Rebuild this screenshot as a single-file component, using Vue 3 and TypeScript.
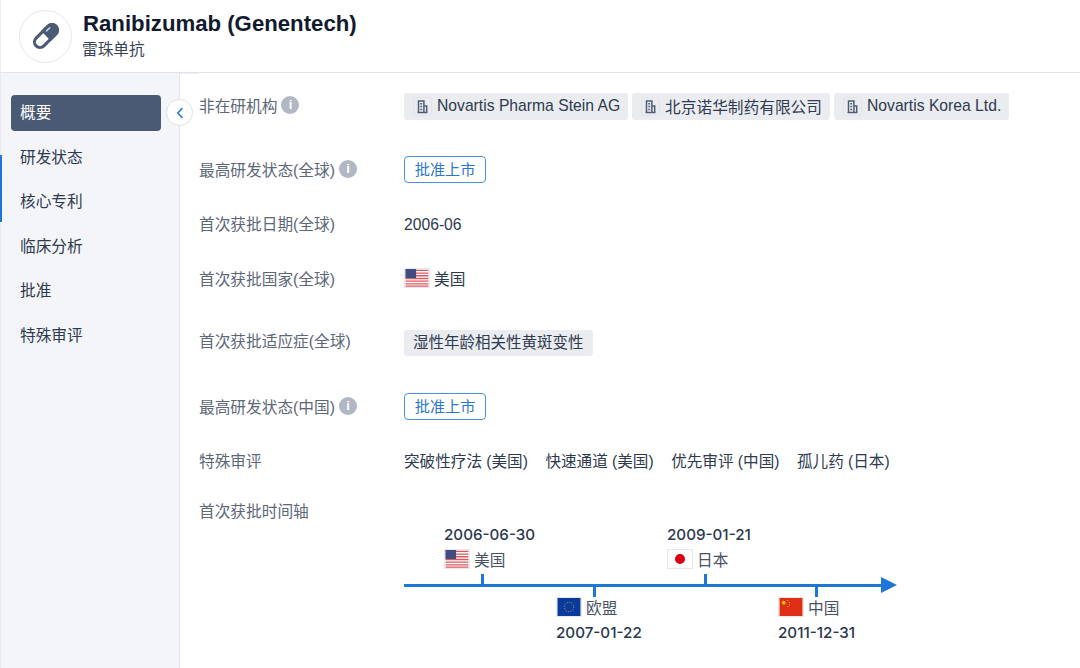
<template>
  <div class="page">
    <header class="head">
      <div class="avatar">
        <svg width="32" height="32" viewBox="0 0 32 32" fill="none">
          <g transform="rotate(-45 16 16)">
            <rect x="2" y="10.5" width="28" height="11" rx="5.5" fill="#fff" stroke="#4a5a75" stroke-width="3" />
            <path d="M16 9h8.5a7 7 0 0 1 0 14H16z" fill="#4a5a75" />
            <path d="M20 12.8h4.5" stroke="#c9d0da" stroke-width="1.6" stroke-linecap="round" />
          </g>
        </svg>
      </div>
      <div>
        <div class="title">Ranibizumab (Genentech)</div>
        <div class="subtitle">雷珠单抗</div>
      </div>
    </header>

    <div class="body">
      <aside class="side">
        <span class="side-mark"></span>
        <div v-for="(item, i) in navItems" :key="item" class="nav-item" :class="{ active: i === 0 }">{{ item }}</div>
        <button class="collapse" type="button">
          <svg width="10" height="12" viewBox="0 0 10 12" fill="none">
            <path d="M7 1.5 2.8 6 7 10.5" stroke="#1f76d9" stroke-width="1.6" stroke-linecap="round" stroke-linejoin="round" />
          </svg>
        </button>
      </aside>

      <main class="content">
        <div class="row r-org">
          <div class="label">非在研机构<i class="info">i</i></div>
          <div class="value orgs">
            <span v-for="org in orgs" :key="org" class="org">
              <span class="org-icon">
                <svg width="13" height="15" viewBox="0 0 13 15" fill="none">
                  <path d="M2.5 13.5V2h5.4v11.5M7.9 7h2.8v6.5M1.5 13.5h10M4.3 4.8h1.8M4.3 7.6h1.8M4.3 10.4h1.8" stroke="#4f5c74" stroke-width="1.5" />
                </svg>
              </span>{{ org }}
            </span>
          </div>
        </div>

        <div class="row r-status">
          <div class="label">最高研发状态(全球)<i class="info">i</i></div>
          <div class="value"><span class="status">批准上市</span></div>
        </div>

        <div class="row r-date">
          <div class="label">首次获批日期(全球)</div>
          <div class="value">2006-06</div>
        </div>

        <div class="row r-country">
          <div class="label">首次获批国家(全球)</div>
          <div class="value country">
            <svg class="flag" viewBox="0 0 26 20"><use href="#flag-us" /></svg>美国
          </div>
        </div>

        <div class="row r-indication">
          <div class="label">首次获批适应症(全球)</div>
          <div class="value"><span class="tag">湿性年龄相关性黄斑变性</span></div>
        </div>

        <div class="row r-status-cn">
          <div class="label">最高研发状态(中国)<i class="info">i</i></div>
          <div class="value"><span class="status">批准上市</span></div>
        </div>

        <div class="row r-review">
          <div class="label">特殊审评</div>
          <div class="value reviews">
            <span v-for="r in reviews" :key="r">{{ r }}</span>
          </div>
        </div>

        <div class="row r-axis">
          <div class="label">首次获批时间轴</div>
          <div class="value">
            <div class="axis">
              <div class="axis-line"></div>
              <div class="axis-head"></div>
              <div v-for="p in points" :key="p.date" class="point" :class="p.pos" :style="{ left: p.left + 'px' }">
                <span class="tick"></span>
                <div class="point-date">{{ p.date }}</div>
                <div class="point-place">
                  <svg class="flag" viewBox="0 0 26 20"><use :href="'#flag-' + p.flag" /></svg>{{ p.name }}
                </div>
              </div>
            </div>
          </div>
        </div>
      </main>
    </div>

    <svg width="0" height="0" class="defs">
      <defs>
        <symbol id="flag-us" viewBox="0 0 26 20">
          <rect width="26" height="20" fill="#fff" />
          <path d="M0 1.5h26M0 4.5h26M0 7.5h26M0 10.5h26M0 13.5h26M0 16.5h26M0 19h26" stroke="#d9595f" stroke-width="1.5" />
          <rect width="12" height="10" fill="#3f4d80" />
        </symbol>
        <symbol id="flag-eu" viewBox="0 0 26 20">
          <rect width="26" height="20" fill="#0a3a9c" />
          <circle cx="13" cy="10" r="5.2" fill="none" stroke="#b9a94a" stroke-width="1" stroke-dasharray="1.2 1.5" />
        </symbol>
        <symbol id="flag-jp" viewBox="0 0 26 20">
          <rect width="26" height="20" fill="#fff" />
          <circle cx="13" cy="10" r="5.6" fill="#d90012" />
        </symbol>
        <symbol id="flag-cn" viewBox="0 0 26 20">
          <rect width="26" height="20" fill="#de2f15" />
          <circle cx="5" cy="5.2" r="2.1" fill="#ffc800" />
          <path d="M9.5 2.2v1.2M11.3 4.4v1.2M11.3 7v1.2M9.5 9v1.2" stroke="#ffc800" stroke-width="1" />
        </symbol>
      </defs>
    </svg>
  </div>
</template>

<script setup lang="ts">
interface AxisPoint {
  date: string
  name: string
  flag: string
  left: number
  pos: 'up' | 'down'
}

const navItems = ['概要', '研发状态', '核心专利', '临床分析', '批准', '特殊审评']
const orgs = ['Novartis Pharma Stein AG', '北京诺华制药有限公司', 'Novartis Korea Ltd.']
const reviews = ['突破性疗法 (美国)', '快速通道 (美国)', '优先审评 (中国)', '孤儿药 (日本)']
const points: AxisPoint[] = [
  { date: '2006-06-30', name: '美国', flag: 'us', left: 40, pos: 'up' },
  { date: '2007-01-22', name: '欧盟', flag: 'eu', left: 152, pos: 'down' },
  { date: '2009-01-21', name: '日本', flag: 'jp', left: 263, pos: 'up' },
  { date: '2011-12-31', name: '中国', flag: 'cn', left: 374, pos: 'down' }
]
</script>

<style>
html,
body {
  margin: 0;
  background: #fff;
  overflow: hidden;
}
</style>

<style scoped>
.page {
  width: 1080px;
  height: 668px;
  overflow: hidden;
  font-family: "Liberation Sans", "Noto Sans CJK SC", sans-serif;
  font-size: 15.7px;
  color: #2f3a4f;
}

.defs {
  position: absolute;
}

.head {
  height: 73px;
  box-sizing: border-box;
  border-bottom: 1px solid #e1e4ea;
  border-left: 1px solid #eceef1;
  display: flex;
  align-items: center;
  gap: 10px;
  padding: 0 0 0 18px;
}

.avatar {
  width: 53px;
  height: 53px;
  box-sizing: border-box;
  border: 1px solid #e6e8ec;
  border-radius: 50%;
  display: flex;
  align-items: center;
  justify-content: center;
}

.title {
  font-size: 22.2px;
  line-height: 26px;
  font-weight: 700;
  color: #111a2e;
  margin-top: -1px;
  margin-left: 1px;
}

.subtitle {
  margin-top: 2px;
  line-height: 22px;
  color: #3a4457;
}

.body {
  display: flex;
  height: 595px;
}

.side {
  position: relative;
  width: 180px;
  flex: none;
  box-sizing: border-box;
  padding: 22px 18px 0 10px;
  background: #f3f5f8;
  border-left: 1px solid #e8eaee;
  border-right: 1px solid #e1e4ea;
}

.side-mark {
  position: absolute;
  left: -1px;
  top: 82px;
  width: 2px;
  height: 67px;
  background: #1f76d9;
}

.nav-item {
  height: 36px;
  line-height: 36px;
  padding-left: 9px;
  margin-bottom: 8.5px;
  border-radius: 4px;
  color: #2f3a4f;
}

.nav-item.active {
  background: #4a5a75;
  color: #fff;
}

.collapse {
  position: absolute;
  right: -14px;
  top: 26px;
  width: 27px;
  height: 27px;
  padding: 0;
  box-sizing: border-box;
  border: 1px solid #dfe2e8;
  border-radius: 50%;
  background: #fff;
  display: flex;
  align-items: center;
  justify-content: center;
}

.content {
  position: relative;
  flex: 1;
  padding-left: 19px;
}

.content::before {
  content: "";
  position: absolute;
  left: 0;
  top: 0;
  width: 18px;
  height: 1px;
  background: #eceef1;
}

.row {
  display: flex;
  align-items: center;
}

.label {
  width: 205px;
  flex: none;
  display: flex;
  align-items: center;
  gap: 4px;
  color: #5d6778;
}

.value {
  display: flex;
  color: #2f3a4f;
}

.info {
  width: 18px;
  height: 18px;
  border-radius: 50%;
  background: #b1b7c3;
  color: #fff;
  font: 700 13px/18px "Liberation Sans", sans-serif;
  text-align: center;
}

.r-org { margin-top: 20px; height: 26.5px; }
.r-org .label { margin-top: -2px; }
.r-status { margin-top: 35.5px; height: 28px; }
.r-date { margin-top: 28px; height: 28px; }
.r-date .label { margin-top: -4px; }
.r-country { margin-top: 25px; height: 28px; }
.r-indication { margin-top: 37px; height: 28px; }
.r-indication .label { margin-top: -6px; }
.r-status-cn { margin-top: 35px; height: 28px; }
.r-review { margin-top: 26px; height: 28px; }
.r-axis { margin-top: 25px; align-items: flex-start; }

.orgs {
  gap: 4px;
}

.org {
  height: 26.5px;
  display: flex;
  align-items: center;
  padding: 0 8px 0 9px;
  border-radius: 3px;
  background: #eaecf0;
  white-space: nowrap;
}

.org-icon {
  width: 19px;
  height: 19px;
  margin-right: 5px;
  box-sizing: border-box;
  border: 1px solid #e2e4e9;
  border-radius: 3px;
  display: flex;
  align-items: center;
  justify-content: center;
}

.status {
  display: inline-block;
  height: 27px;
  line-height: 25px;
  box-sizing: border-box;
  padding: 0 9.7px;
  border: 1px solid #4a90e2;
  border-radius: 4px;
  font-size: 15.2px;
  color: #2b76d2;
}

.country {
  align-items: center;
  gap: 4px;
}

.flag {
  width: 26px;
  height: 20px;
  flex: none;
  box-sizing: border-box;
  border: 1px solid #e6e8ec;
}

.tag {
  display: inline-block;
  height: 26.5px;
  line-height: 26.5px;
  padding: 0 9px;
  border-radius: 3px;
  background: #eaecf0;
  font-size: 15.5px;
}

.reviews {
  gap: 17.5px;
  font-size: 15.6px;
}

.axis {
  position: relative;
  width: 500px;
  height: 140px;
  margin-top: 10px;
}

.axis-line {
  position: absolute;
  left: 0;
  top: 75px;
  width: 480px;
  height: 3px;
  background: #1f76d9;
}

.axis-head {
  position: absolute;
  left: 477px;
  top: 68px;
  border-left: 16px solid #1f76d9;
  border-top: 8px solid transparent;
  border-bottom: 8px solid transparent;
}

.point {
  position: absolute;
  top: 0;
  display: flex;
  flex-direction: column;
  white-space: nowrap;
}

.tick {
  position: absolute;
  left: 37px;
  width: 3px;
  height: 11px;
  background: #1f76d9;
}

.point.up .tick { top: 65px; }

.point-date {
  font-family: Inter, "Liberation Sans", sans-serif;
  font-size: 15.2px;
  font-weight: 500;
  line-height: 20px;
  color: #2b3750;
}

.point.up .point-date { margin-top: 16px; }
.point.down { flex-direction: column-reverse; justify-content: flex-end; top: 87px; }
.point.down .tick { top: -10px; }
.point.down .point-date { margin-top: 5px; }

.point-place {
  display: flex;
  align-items: center;
  gap: 4px;
  color: #4a5365;
  height: 22px;
}

.point.up .point-place { margin-top: 3px; }
</style>
